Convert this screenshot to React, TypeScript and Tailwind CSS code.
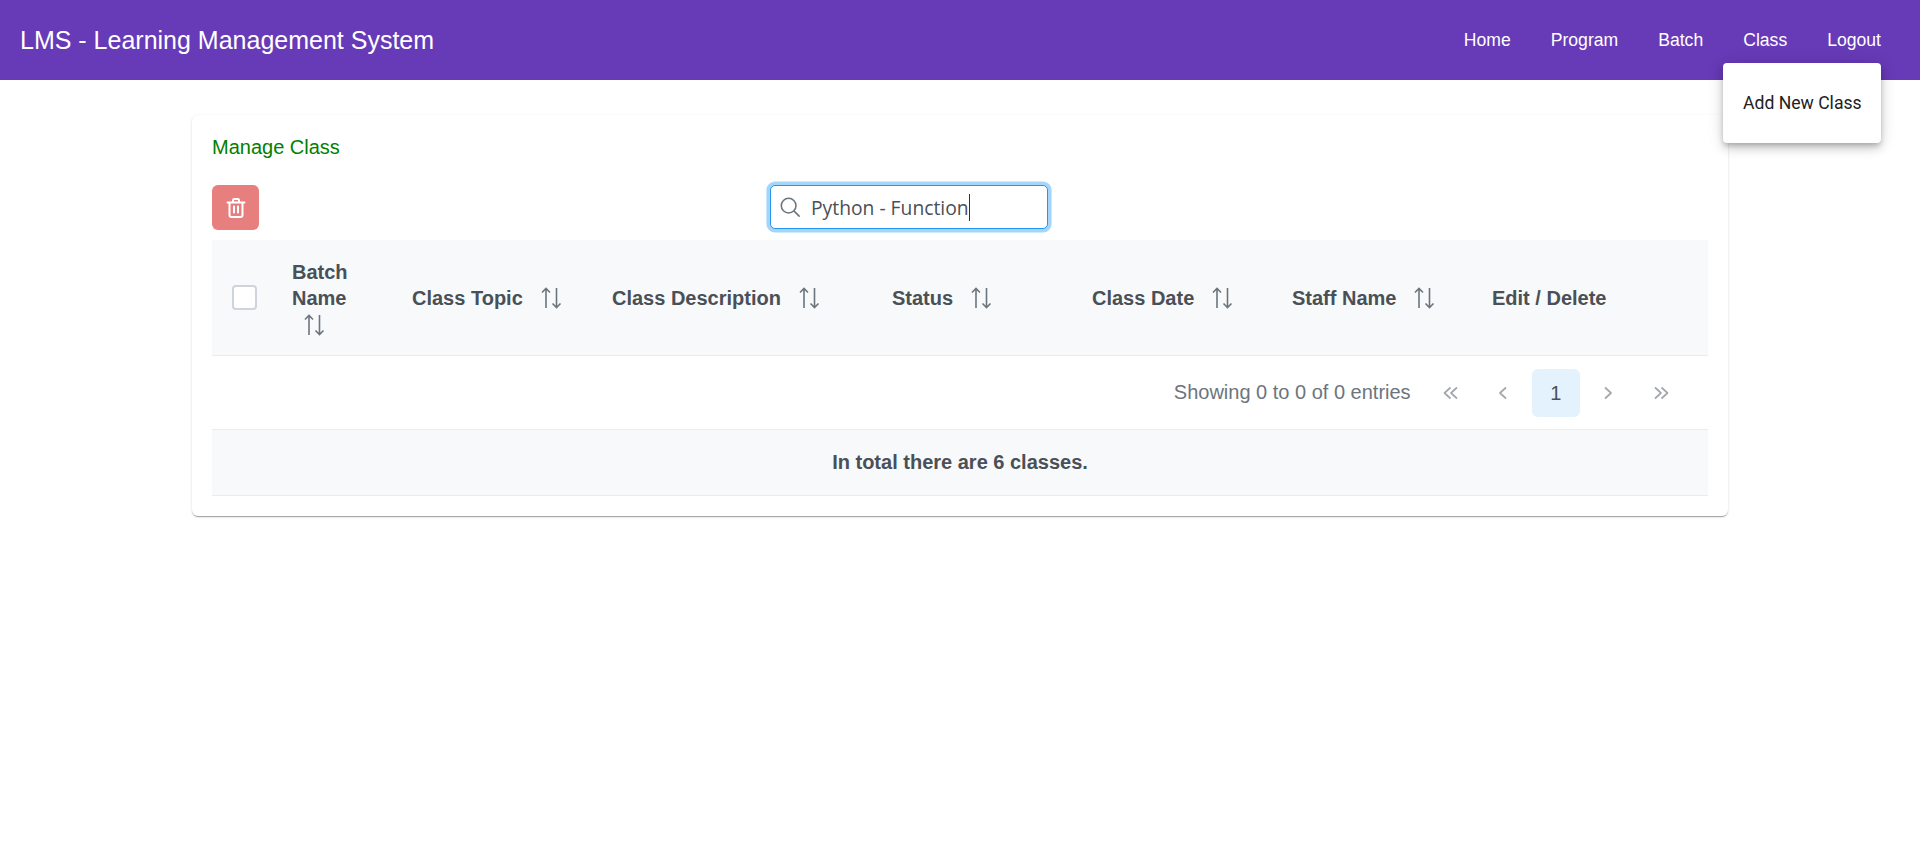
// App.tsx
import React from 'react';

const SortIcon = ({ className = '' }: { className?: string }) => (
  <svg viewBox="0 0 21 22" className={`w-[21px] h-[22px] shrink-0 ${className}`} fill="none" stroke="#6c757d" strokeWidth="1.6">
    <path d="M5 21V1.500M1 5.500 5 1.500l4 4" />
    <path d="M15.500 1v19.500M11.500 16.500l4 4 4-4" />
  </svg>
);

const Chevrons = ({ dir, double }: { dir: 'left' | 'right'; double?: boolean }) => (
  <svg viewBox="0 0 16 16" className="w-4 h-4" fill="none" stroke="#a3a8ad" strokeWidth="1.700" strokeLinejoin="round">
    {dir === 'left' ? (
      double ? <path d="M7.500 2.500 1.500 8l6 5.500M14 2.500 8 8l6 5.500" /> : <path d="M11 2.500 5 8l6 5.500" />
    ) : (
      double ? <path d="M2 2.500 8 8l-6 5.500M8.500 2.500l6 5.500-6 5.500" /> : <path d="M5 2.500 11 8l-6 5.500" />
    )}
  </svg>
);

const columns = [
  { label: 'Class Topic', width: 'w-[200px]' },
  { label: 'Class Description', width: 'w-[280px]' },
  { label: 'Status', width: 'w-[200px]' },
  { label: 'Class Date', width: 'w-[200px]' },
  { label: 'Staff Name', width: 'w-[200px]' },
];

const navItems = ['Home', 'Program', 'Batch', 'Class', 'Logout'];

export default function App() {
  return (
    <div className="min-h-[847px] bg-white font-['Liberation_Sans',Arial,sans-serif]">
      <header className="relative h-20 bg-[#673ab7] text-white flex items-center justify-between pl-5 pr-[39px]">
        <div className="text-[25px] leading-none">LMS - Learning Management System</div>
        <nav className="flex gap-[40px] text-[17.6px]">
          {navItems.map((n) => (
            <span key={n}>{n}</span>
          ))}
        </nav>
        <div className="absolute right-[39px] top-[63px] w-[158px] h-[80px] bg-white rounded-[4px] shadow-[0_3px_5px_-1px_rgba(0,0,0,0.2),0_6px_10px_0_rgba(0,0,0,0.14),0_1px_18px_0_rgba(0,0,0,0.12)] flex items-center px-5 whitespace-nowrap font-['Roboto',sans-serif] text-[17.6px] text-[#212121] z-10">
          Add New Class
        </div>
      </header>

      <main className="px-[192px] pt-[35px]">
        <div className="bg-white rounded-[6px] p-5 shadow-[0_2px_1px_-1px_rgba(0,0,0,0.2),0_1px_1px_0_rgba(0,0,0,0.14),0_1px_3px_0_rgba(0,0,0,0.12)]">
          <div className="text-[20px] leading-[25px] text-[#008000] h-[50px]">Manage Class</div>

          <div className="flex items-start h-[45px] mb-[10px]">
            <button className="w-[47px] h-[45px] rounded-[6px] bg-[#e77f7f] flex items-center justify-center">
              <svg viewBox="0 0 24 24" className="w-6 h-6" fill="none" stroke="#fff" strokeWidth="2" strokeLinecap="round" strokeLinejoin="round">
                <path d="M3.500 6.500h17M9 6V4.200C9 3.500 9.500 3 10.200 3h3.600c.7 0 1.200.5 1.200 1.200V6" />
                <path d="M5.500 7v12c0 1.200.9 2 2 2h9c1.100 0 2-.8 2-2V7" />
                <path d="M10 10.500v6M14 10.500v6" />
              </svg>
            </button>
            <div className="ml-[511px] w-[278px] h-[44px] rounded-[5px] border border-[#2196f3] ring-[3.600px] ring-[#a6d5fa] bg-white flex items-center pl-[8px] text-[#495057] font-['Open_Sans',sans-serif] text-[19.300px]">
              <svg viewBox="0 0 24 24" className="w-[22px] h-[22px] mr-[10px]" fill="none" stroke="#6c757d" strokeWidth="1.700" strokeLinecap="round">
                <circle cx="10.500" cy="10.500" r="8" />
                <path d="M16.500 16.500 22 22" />
              </svg>
              <span className="border-r border-[#333] leading-[27px]">Python - Function</span>
            </div>
          </div>

          <div className="flex items-center h-[116px] bg-[#f8f9fa] border-b border-[#e9ecef] font-bold text-[20px] leading-[26px] text-[#495057]">
            <div className="w-[60px] pl-[20px] shrink-0">
              <div className="w-[25px] h-[25px] rounded-[4px] border-2 border-[#ced4da] bg-white" />
            </div>
            <div className="w-[120px] shrink-0 pl-[20px] -mt-[1px]">
              <div>Batch</div>
              <div>Name</div>
              <SortIcon className="ml-[12px] mt-[3px]" />
            </div>
            {columns.map((c) => (
              <div key={c.label} className={`${c.width} shrink-0 pl-[20px] flex items-center gap-[18px]`}>
                <span>{c.label}</span>
                <SortIcon />
              </div>
            ))}
            <div className="pl-[20px]">Edit / Delete</div>
          </div>

          <div className="h-[74px] flex items-center justify-end border-b border-[#e9ecef] pr-[23px] text-[#6c757d] text-[20px]">
            <span className="mr-[16px] -mt-[2px]">Showing 0 to 0 of 0 entries</span>
            <div className="flex items-center gap-[4.600px]">
              <span className="w-[48px] h-[48px] flex items-center justify-center"><Chevrons dir="left" double /></span>
              <span className="w-[48px] h-[48px] flex items-center justify-center"><Chevrons dir="left" /></span>
              <span className="w-[48px] h-[48px] rounded-[6px] bg-[#e3f2fd] text-[#495057] flex items-center justify-center">1</span>
              <span className="w-[48px] h-[48px] flex items-center justify-center"><Chevrons dir="right" /></span>
              <span className="w-[48px] h-[48px] flex items-center justify-center"><Chevrons dir="right" double /></span>
            </div>
          </div>

          <div className="h-[66px] pb-[2px] flex items-center justify-center bg-[#f8f9fa] border-b border-[#e9ecef] font-bold text-[20px] text-[#495057]">
            In total there are 6 classes.
          </div>
        </div>
      </main>
    </div>
  );
}
